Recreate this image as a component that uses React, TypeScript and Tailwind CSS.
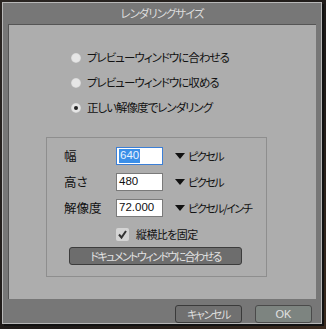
import React from "react";

const jp = "font-['Noto_Sans_CJK_JP','Noto_Sans',sans-serif] [font-feature-settings:'palt']";

function Radio({ checked, label }: { checked?: boolean; label: string }) {
  return (
    <div className="flex h-[25px] items-center">
      <div className="flex h-[10px] w-[10px] items-center justify-center rounded-full bg-[#e6e6e6] shadow-[inset_0_0_1px_#9a9a9a]">
        {checked && <div className="h-[4px] w-[4px] rounded-full bg-[#222]" />}
      </div>
      <span className={`ml-[6px] text-[11.5px] leading-none tracking-[-1px] text-[#111] ${jp}`}>{label}</span>
    </div>
  );
}

function Tri() {
  return (
    <svg width="10" height="6" viewBox="0 0 10 6" className="shrink-0">
      <polygon points="0,0 10,0 5,6" fill="#111" />
    </svg>
  );
}

function Row({
  label,
  value,
  unit,
  selected,
}: {
  label: string;
  value: string;
  unit: string;
  selected?: boolean;
}) {
  return (
    <div className="flex h-[18px] items-center">
      <span className={`w-[52px] text-[12.5px] leading-none text-[#111] ${jp}`}>{label}</span>
      <div
        className={`flex h-[18px] w-[47px] items-center border bg-white pl-[2px] font-['Liberation_Sans',Arial,sans-serif] text-[11.5px] leading-none ${
          selected ? "border-[#3c7fd6]" : "border-[#7a7a7a]"
        }`}
      >
        {selected ? (
          <span className="bg-[#3b8fe8] px-[1px] py-[1px] text-[#e8f2ff]">{value}</span>
        ) : (
          <span className="text-[#111]">{value}</span>
        )}
      </div>
      <div className="ml-[12px] flex items-center">
        <Tri />
        <span className={`ml-[3px] text-[11px] leading-none tracking-[-1.4px] text-[#111] ${jp}`}>{unit}</span>
      </div>
    </div>
  );
}

export default function App() {
  return (
    <div className="h-[329px] w-[326px] bg-[linear-gradient(135deg,#2a2522_0%,#1e1a18_60%,#3a2a1e_100%)] pl-[2px] pt-[2px]">
      <div className="flex h-[322px] w-[320px] flex-col border border-[#b8b8b8] bg-[#777777] shadow-[2px_2px_0_#111]">
        {/* title */}
        <div className="flex h-[21px] items-center justify-center">
          <span className={`text-[11.5px] leading-none tracking-[-1px] text-[#dcdcdc] ${jp}`}>レンダリングサイズ</span>
        </div>
        {/* panel */}
        <div className="ml-[5px] flex h-[275px] w-[308px] flex-col border-l border-t border-[#555] border-b-[#8a8a8a] border-r-[#c4c4c4] bg-[#adadad]">
          <div className="flex flex-col pl-[62px] pt-[20px]">
            <Radio label="プレビューウィンドウに合わせる" />
            <Radio label="プレビューウィンドウに収める" />
            <Radio checked label="正しい解像度でレンダリング" />
          </div>
          {/* group box */}
          <div className="ml-[37px] mt-[17px] flex h-[140px] w-[221px] flex-col border border-[#8e8e8e] pl-[17px] pt-[9px]">
            <div className="flex flex-col gap-[8px]">
              <Row label="幅" value="640" unit="ピクセル" selected />
              <Row label="高さ" value="480" unit="ピクセル" />
              <Row label="解像度" value="72.000" unit="ピクセル/インチ" />
            </div>
            <div className="ml-[52px] mt-[11px] flex items-center">
              <div className="flex h-[13px] w-[13px] items-center justify-center rounded-[2px] bg-[#d4d4d4]">
                <svg width="11" height="11" viewBox="0 0 11 11">
                  <path d="M2 5.5 L4.5 8.5 L9 2" fill="none" stroke="#333" strokeWidth="2" />
                </svg>
              </div>
              <span className={`ml-[7px] text-[11px] leading-none tracking-[-0.6px] text-[#111] ${jp}`}>縦横比を固定</span>
            </div>
            <div className="ml-[5px] mt-[6px] flex h-[18px] w-[173px] items-center justify-center rounded-[3px] border border-[#3c3c3c] bg-[#6d6d6d]">
              <span className={`text-[11px] leading-none tracking-[-1.6px] text-[#e2e2e2] ${jp}`}>ドキュメントウィンドウに合わせる</span>
            </div>
          </div>
        </div>
        {/* bottom buttons */}
        <div className="flex flex-1 items-end justify-end gap-[13px] pr-[9px]">
          <div className="flex h-[18px] w-[67px] items-center justify-center rounded-[3px] border border-[#3a3a3a] bg-[#707070]">
            <span className={`text-[11px] leading-none tracking-[-1.4px] text-[#dedede] ${jp}`}>キャンセル</span>
          </div>
          <div className="flex h-[18px] w-[57px] items-center justify-center rounded-[3px] border border-[#4a4a4a] bg-[#7d8480]">
            <span className="font-['Liberation_Sans',Arial,sans-serif] text-[11px] leading-none text-[#e2e2e2]">OK</span>
          </div>
        </div>
      </div>
    </div>
  );
}
